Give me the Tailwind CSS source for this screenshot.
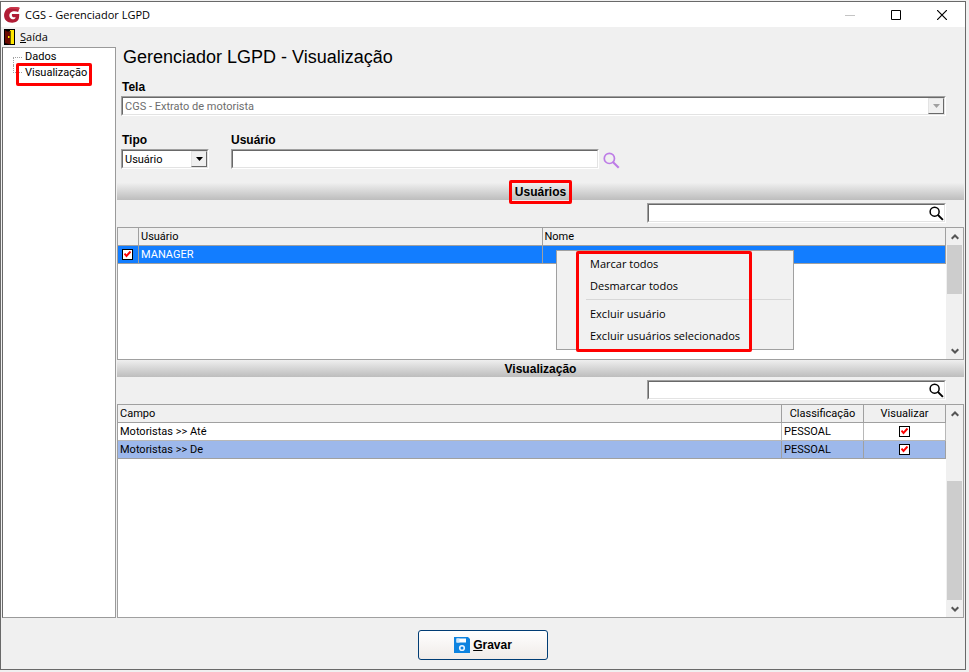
<!DOCTYPE html>
<html lang="pt-BR">
<head>
<meta charset="utf-8">
<title>CGS - Gerenciador LGPD</title>
<script src="https://cdn.jsdelivr.net/npm/@tailwindcss/browser@4"></script>
</head>
<body class="min-h-screen flex flex-col bg-[#f0f0f0] pt-px pr-[3px] pb-[2px] text-black text-[11px] leading-[17px] font-[Roboto,Arial,sans-serif]">
<svg class="hidden" aria-hidden="true">
  <symbol id="down" viewBox="0 0 7 4"><path d="M0 0h7L3.5 4z" fill="currentColor"/></symbol>
  <symbol id="chev-up" viewBox="0 0 8 6"><path d="M.7 4.8L4 1.5l3.300 3.300" fill="none" stroke="#555" stroke-width="2"/></symbol>
  <symbol id="chev-down" viewBox="0 0 8 6"><path d="M.7 1.200L4 4.500l3.300-3.300" fill="none" stroke="#555" stroke-width="2"/></symbol>
  <symbol id="lens" viewBox="0 0 16 16"><circle cx="6" cy="6" r="4.800" fill="none" stroke="currentColor" stroke-width="1.600"/><path d="M9.300 9.300l5.500 5.500" fill="none" stroke="currentColor" stroke-width="2"/></symbol>
</svg>
<div class="flex-1 flex flex-col border border-[#696969]">
  <header class="h-[25px] flex items-center bg-white pl-[3px] font-['Open_Sans','Noto_Sans',sans-serif] text-[11px]">
    <svg class="w-4 h-4 mr-[5px]" viewBox="0 0 16 16"><path d="M15.600.8C11-.6 5.500-.3 2.400 2.500-.7 5.400-.6 10.800 2 13.500c2.600 2.700 8.600 3 11.300.6 1.700-1.500 2-4.200 1.900-7H8.100c-.7 1.700.2 3.200 1.800 3.200h1.700c-.3 1.900-2.400 2.500-4.200 1.700-2.500-1.100-2.700-4.800-.8-6.500 1.900-1.700 5-1.600 7.600-.6z" fill="#b01c35"/><path d="M1.400 3.600C4-.6 10-.9 15.600.8L14.900 2.800C9.500 1.300 4.500 1.500 1.400 3.600z" fill="#c9364a"/></svg>
    <h1>CGS - Gerenciador LGPD</h1>
    <div class="ml-auto flex items-center">
      <button aria-label="Minimizar" disabled class="w-[46px] h-[25px] grid place-items-center"><svg class="w-[10px] h-[10px]" viewBox="0 0 10 10"><path d="M0 5.500h10" stroke="#c4c4c4"/></svg></button>
      <button aria-label="Maximizar" class="w-[46px] h-[25px] grid place-items-center"><svg class="w-[10px] h-[10px]" viewBox="0 0 10 10"><path d="M.5.5h9v9h-9z" fill="none" stroke="#000"/></svg></button>
      <button aria-label="Fechar" class="w-[46px] h-[25px] grid place-items-center"><svg class="w-[10px] h-[10px]" viewBox="0 0 10 10"><path d="M0 0l10 10M10 0L0 10" stroke="#000" stroke-width="1.200"/></svg></button>
    </div>
  </header>
  <nav class="h-[19px] flex items-center pl-[3px] font-['Open_Sans','Noto_Sans',sans-serif] text-[11px]">
    <button class="flex items-center gap-[5px]">
      <svg class="w-[11px] h-4" viewBox="0 0 11 16"><path d="M0 0h11v16H0z" fill="#000"/><path d="M5 1h5v14H5z" fill="#ffe600"/><path d="M1 1h3l2 2v12.500L1 14z" fill="#6b0a00"/><path d="M1 1h5v1.500H3z" fill="#000"/><path d="M6.500 2v13.500" stroke="#000" stroke-width=".6"/><path d="M4 7h1.500v2H4z" fill="#ffe600"/></svg>
      <span><u>S</u>aída</span>
    </button>
  </nav>
  <div class="flex-1 flex pl-px pr-px gap-px">
    <aside class="w-[114px] shrink-0 mt-px bg-white border border-[#9a9a9a] border-l-[#696969]">
      <ul class="relative ml-[10px] pt-px leading-[16px]">
        <li class="h-4 flex items-end"><span class="w-[9px] h-2 border-t border-l border-dotted border-[#a0a0a0]"></span><a href="#" class="pl-[3px]">Dados</a></li>
        <li class="h-4 flex items-start"><span class="w-[9px] h-2 border-b border-l border-dotted border-[#a0a0a0]"></span><a href="#" class="pl-[3px]">Visualização</a></li>
        <li aria-hidden="true" class="absolute left-[3px] top-[15px] w-[76px] h-[23px] border-3 border-[#ff0000] rounded-xs"></li>
      </ul>
    </aside>
    <main class="flex-1 min-w-0 flex flex-col">
      <h2 class="pl-[6px] h-[22px] text-[18px] leading-[22px] font-['Liberation_Sans',Arial,sans-serif]">Gerenciador LGPD - Visualização</h2>
      <form class="flex flex-col pl-1 pr-[18px]">
        <label for="tela" class="mt-[11px] pl-px text-[12px] font-bold font-['Liberation_Sans',Arial,sans-serif]">Tela</label>
        <div class="border border-t-[#a0a0a0] border-l-[#a0a0a0] border-b-white border-r-white">
          <div class="h-[18px] flex border border-t-[#696969] border-l-[#696969] border-b-[#e3e3e3] border-r-[#e3e3e3] bg-white">
            <select id="tela" disabled class="appearance-none flex-1 min-w-0 pl-[2px] text-[#6d6d6d] opacity-100"><option>CGS - Extrato de motorista</option></select>
            <span class="w-4 h-4 grid place-items-center bg-[#f0f0f0] border border-[#e3e3e3] border-r-[#696969] border-b-[#696969] text-[#a0a0a0]"><svg class="w-[7px] h-1"><use href="#down"/></svg></span>
          </div>
        </div>
        <div class="mt-4 flex items-end">
          <div class="w-[88px] mr-[22px]">
            <label for="tipo" class="block pl-px text-[12px] font-bold font-['Liberation_Sans',Arial,sans-serif]">Tipo</label>
            <div class="border border-t-[#a0a0a0] border-l-[#a0a0a0] border-b-white border-r-white">
              <div class="h-[18px] flex border border-t-[#696969] border-l-[#696969] border-b-[#e3e3e3] border-r-[#e3e3e3] bg-white">
                <select id="tipo" class="appearance-none flex-1 min-w-0 pl-[2px]"><option>Usuário</option></select>
                <span class="w-4 h-4 grid place-items-center bg-[#f0f0f0] border border-[#e3e3e3] border-r-[#696969] border-b-[#696969]"><svg class="w-[7px] h-1"><use href="#down"/></svg></span>
              </div>
            </div>
          </div>
          <div class="w-[368px]">
            <label for="usuario" class="block text-[12px] font-bold font-['Liberation_Sans',Arial,sans-serif]">Usuário</label>
            <div class="border border-t-[#a0a0a0] border-l-[#a0a0a0] border-b-white border-r-white">
              <input id="usuario" type="text" class="block w-full h-[18px] px-1 bg-white border border-t-[#696969] border-l-[#696969] border-b-[#e3e3e3] border-r-[#e3e3e3]">
            </div>
          </div>
          <button type="button" aria-label="Pesquisar usuário" class="ml-1 text-[#bd7ce6]"><svg class="w-[17px] h-[17px]"><use href="#lens"/></svg></button>
        </div>
      </form>

      <h3 class="mt-[14px] h-[17px] bg-linear-to-b from-[#efefef] to-[#bdbdbd] text-center text-[12px] leading-[18px] font-bold font-['Liberation_Sans',Arial,sans-serif]"><span class="relative">Usuários<span aria-hidden="true" class="absolute -inset-x-[6px] -top-[5px] h-6 border-3 border-[#ff0000] rounded-xs"></span></span></h3>
      <div class="h-[27px] pt-[3px] pr-[18px] flex justify-end">
        <div class="w-[299px] h-5 border border-t-[#a0a0a0] border-l-[#a0a0a0] border-b-white border-r-white">
          <label class="h-[18px] flex items-center bg-white border border-t-[#696969] border-l-[#696969] border-b-[#e3e3e3] border-r-[#e3e3e3]">
            <input type="search" aria-label="Pesquisar nos usuários" class="flex-1 min-w-0 px-1 appearance-none"><svg class="w-[15px] h-[15px] text-black"><use href="#lens"/></svg>
          </label>
        </div>
      </div>
      <section class="relative h-[133px] flex bg-white border border-[#a0a0a0]">
        <div class="flex-1">
          <table class="w-full table-fixed border-separate border-spacing-0 text-left">
            <colgroup><col class="w-[21px]"><col class="w-1/2"><col class="w-1/2"></colgroup>
            <thead><tr class="h-[18px] bg-[#f0f0f0]">
              <th class="p-0 border-r border-b border-[#a0a0a0]"></th>
              <th class="p-0 pl-[2px] font-normal border-r border-b border-[#a0a0a0]">Usuário</th>
              <th class="p-0 pl-[2px] font-normal border-r border-b border-[#a0a0a0]">Nome</th>
            </tr></thead>
            <tbody><tr class="h-[18px] bg-[#127dff] text-white">
              <td class="p-0 pl-1 border-r border-b border-[#a0a0a0]"><label class="relative block w-[11px] h-[11px]"><input type="checkbox" checked aria-label="Selecionar MANAGER" class="block appearance-none w-[11px] h-[11px] bg-white border border-black"><svg class="absolute left-[2px] top-[2px] w-[7px] h-[7px]" viewBox="0 0 7 7"><path d="M.5 2.500l2 2.500 4-4.500" fill="none" stroke="#f00" stroke-width="2"/></svg></label></td>
              <td class="p-0 pl-[2px] border-r border-b border-[#a0a0a0]">MANAGER</td>
              <td class="p-0 border-r border-b border-[#a0a0a0]"></td>
            </tr></tbody>
          </table>
        </div>
        <div class="w-[17px] flex flex-col pl-px bg-[#f0f0f0]">
          <button aria-label="Rolar para cima" class="h-[17px] grid place-items-center"><svg class="w-2 h-[6px]"><use href="#chev-up"/></svg></button>
          <div class="flex-1"><div class="h-1/2 mr-px bg-[#cdcdcd]"></div></div>
          <button aria-label="Rolar para baixo" class="h-[17px] grid place-items-center"><svg class="w-2 h-[6px]"><use href="#chev-down"/></svg></button>
        </div>
        <div role="menu" class="absolute left-[438px] top-[22px] w-[238px] h-[100px] py-[2px] pl-[29px] bg-[#f1f1f1] border border-[#a0a0a0] font-['Open_Sans','Noto_Sans',sans-serif] text-[11px] leading-[22px] flex flex-col">
          <button role="menuitem" class="text-left pl-1">Marcar todos</button>
          <button role="menuitem" class="text-left pl-1">Desmarcar todos</button>
          <hr class="mt-[2px] mb-[3px] mr-[2px] border-t border-[#d7d7d7]">
          <button role="menuitem" class="text-left pl-1">Excluir usuário</button>
          <button role="menuitem" class="text-left pl-1">Excluir usuários selecionados</button>
          <span aria-hidden="true" class="absolute left-[19px] top-0 w-[176px] h-[101px] border-3 border-[#ff0000] rounded-xs"></span>
        </div>
      </section>

      <h3 class="h-[17px] bg-linear-to-b from-[#efefef] to-[#bdbdbd] text-center text-[12px] leading-[18px] font-bold font-['Liberation_Sans',Arial,sans-serif]">Visualização</h3>
      <div class="h-[27px] pt-[3px] pr-[18px] flex justify-end">
        <div class="w-[299px] h-5 border border-t-[#a0a0a0] border-l-[#a0a0a0] border-b-white border-r-white">
          <label class="h-[18px] flex items-center bg-white border border-t-[#696969] border-l-[#696969] border-b-[#e3e3e3] border-r-[#e3e3e3]">
            <input type="search" aria-label="Pesquisar nos campos" class="flex-1 min-w-0 px-1 appearance-none"><svg class="w-[15px] h-[15px] text-black"><use href="#lens"/></svg>
          </label>
        </div>
      </div>
      <section class="flex-1 flex bg-white border border-[#a0a0a0]">
        <div class="flex-1">
          <table class="w-full table-fixed border-separate border-spacing-0 text-left">
            <colgroup><col><col class="w-[82px]"><col class="w-[82px]"></colgroup>
            <thead><tr class="h-[18px] bg-[#f0f0f0]">
              <th class="p-0 pl-[2px] font-normal border-r border-b border-[#a0a0a0]">Campo</th>
              <th class="p-0 font-normal text-center border-r border-b border-[#a0a0a0]">Classificação</th>
              <th class="p-0 font-normal text-center border-r border-b border-[#a0a0a0]">Visualizar</th>
            </tr></thead>
            <tbody>
              <tr class="h-[18px]">
                <td class="p-0 pl-[2px] border-r border-b border-[#b8b8b8]">Motoristas &gt;&gt; Até</td>
                <td class="p-0 pl-[2px] border-r border-b border-[#b8b8b8]">PESSOAL</td>
                <td class="p-0 border-r border-b border-[#b8b8b8]"><label class="relative block mx-auto w-[11px] h-[11px]"><input type="checkbox" checked aria-label="Visualizar Até" class="block appearance-none w-[11px] h-[11px] bg-white border border-black"><svg class="absolute left-[2px] top-[2px] w-[7px] h-[7px]" viewBox="0 0 7 7"><path d="M.5 2.500l2 2.500 4-4.500" fill="none" stroke="#f00" stroke-width="2"/></svg></label></td>
              </tr>
              <tr class="h-[18px] bg-[#9db8eb]">
                <td class="p-0 pl-[2px] border-r border-b border-[#a0a0a0]">Motoristas &gt;&gt; De</td>
                <td class="p-0 pl-[2px] border-r border-b border-[#a0a0a0]">PESSOAL</td>
                <td class="p-0 border-r border-b border-[#a0a0a0]"><label class="relative block mx-auto w-[11px] h-[11px]"><input type="checkbox" checked aria-label="Visualizar De" class="block appearance-none w-[11px] h-[11px] bg-white border border-black"><svg class="absolute left-[2px] top-[2px] w-[7px] h-[7px]" viewBox="0 0 7 7"><path d="M.5 2.500l2 2.500 4-4.500" fill="none" stroke="#f00" stroke-width="2"/></svg></label></td>
              </tr>
            </tbody>
          </table>
        </div>
        <div class="w-[17px] flex flex-col pl-px bg-[#f0f0f0]">
          <button aria-label="Rolar para cima" class="h-[17px] grid place-items-center"><svg class="w-2 h-[6px]"><use href="#chev-up"/></svg></button>
          <div class="flex-1 flex flex-col justify-end"><div class="h-2/3 mr-px bg-[#cdcdcd]"></div></div>
          <button aria-label="Rolar para baixo" class="h-[17px] grid place-items-center"><svg class="w-2 h-[6px]"><use href="#chev-down"/></svg></button>
        </div>
      </section>
    </main>
  </div>
  <footer class="h-[51px] pt-3 flex justify-center items-start">
    <button class="w-[130px] h-[30px] flex items-center justify-center gap-[3px] rounded-[3px] border border-[#003c74] bg-linear-to-b from-white to-[#f0ebe8] text-[12px] font-bold font-['Liberation_Sans',Arial,sans-serif]">
      <svg class="w-4 h-4" viewBox="0 0 16 16"><path d="M0 0h14l2 2v14H0z" fill="#0d83e0"/><path d="M2.500 1.500h9.500v4H2.500z" fill="#fff"/><path d="M2.500 1.500h3v4h-3z" fill="#cfe6fa"/><circle cx="8" cy="11" r="2.300" fill="none" stroke="#e8f4ff" stroke-width="1.600"/></svg>
      <span><u>G</u>ravar</span>
    </button>
  </footer>
</div>
</body>
</html>
